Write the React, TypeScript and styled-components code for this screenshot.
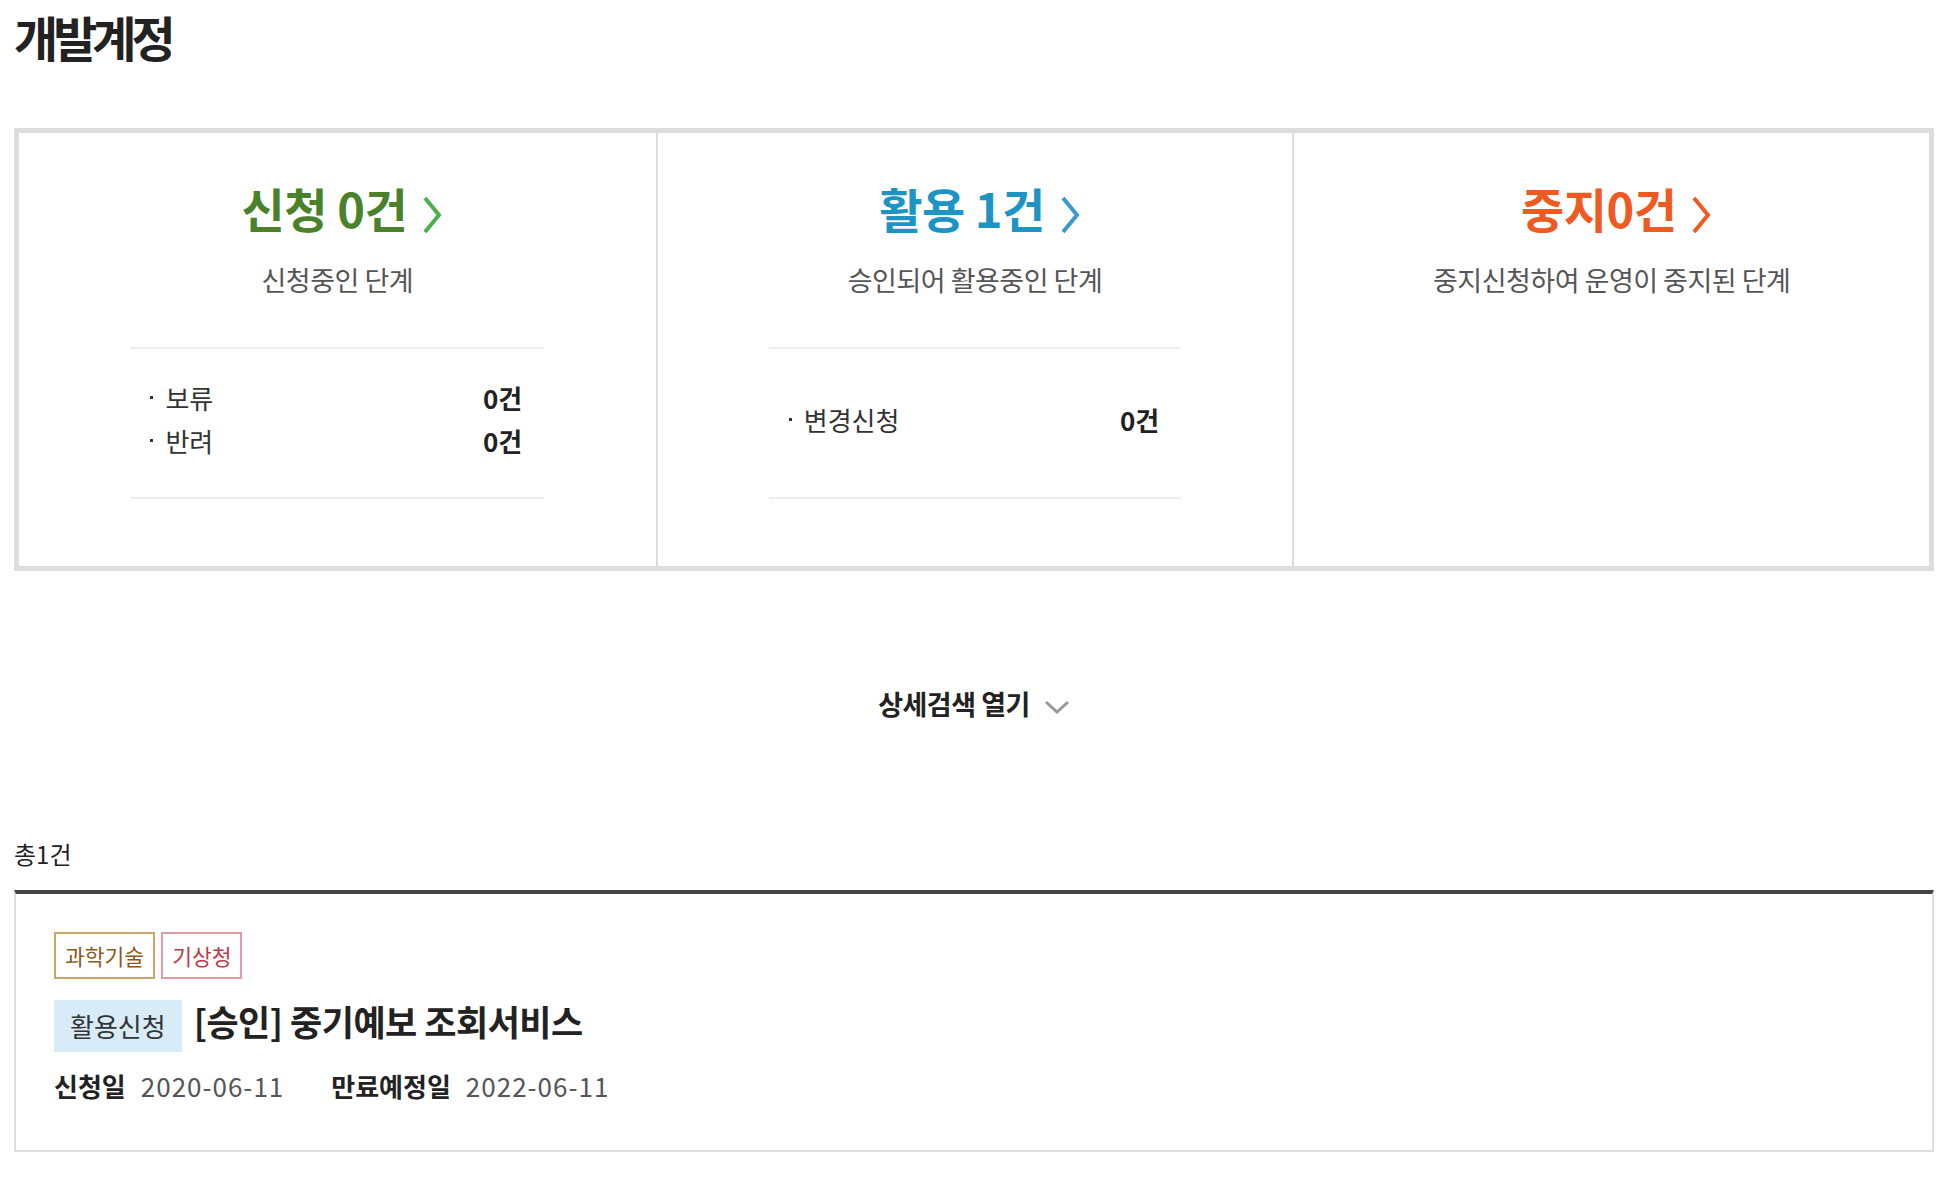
import React from 'react';
import styled, { createGlobalStyle } from 'styled-components';

const GlobalStyle = createGlobalStyle`
  html, body { margin: 0; padding: 0; background: #fff; }
  body {
    font-family: "Noto Sans CJK KR", "Noto Sans", sans-serif;
    color: #222;
  }
  * { box-sizing: border-box; }
`;

const Page = styled.div`
  width: 1920px;
  margin-left: 14px;
  padding-top: 6px;
  padding-bottom: 40px;
`;

const PageTitle = styled.h1`
  margin: 0;
  font-size: 48px;
  line-height: 60px;
  font-weight: 700;
  letter-spacing: -5px;
  color: #222;
`;

const StatusBox = styled.div`
  margin-top: 62px;
  display: grid;
  grid-template-columns: repeat(3, 1fr);
  border: 5px solid #ddd;
`;

const StatusColumn = styled.div`
  display: flex;
  flex-direction: column;
  align-items: center;
  padding: 49px 0 67px;
  & + & {
    border-left: 2px solid #ddd;
  }
`;

const StatusHeading = styled.a<{ $color: string }>`
  display: flex;
  align-items: center;
  padding-left: 10px;
  font-size: 47px;
  line-height: 52px;
  font-weight: 700;
  letter-spacing: -0.5px;
  color: ${(p) => p.$color};
  text-decoration: none;
  cursor: pointer;
`;

const HeadingChevron = styled.svg`
  width: 22px;
  height: 38px;
  margin-left: 14px;
  margin-top: 14px;
  flex: none;
`;

const StatusDesc = styled.p`
  margin: 28px 0 0;
  font-size: 27px;
  line-height: 36px;
  letter-spacing: -0.5px;
  color: #555;
`;

const SubList = styled.ul`
  list-style: none;
  margin: 49px 0 0;
  width: 65%;
  height: 152px;
  border-top: 2px solid #eee;
  border-bottom: 2px solid #eee;
  display: flex;
  flex-direction: column;
  justify-content: center;
  padding: 0 22px 8px 20px;
`;

const SubItem = styled.li`
  display: flex;
  justify-content: space-between;
  align-items: center;
  font-size: 26px;
  line-height: 43px;
  color: #333;
`;

const SubLabel = styled.span`
  display: flex;
  align-items: center;
  &::before {
    content: '';
    width: 3px;
    height: 3px;
    background: #333;
    margin-right: 12px;
  }
`;

const SubCount = styled.strong`
  font-weight: 700;
  color: #222;
`;

const DetailToggle = styled.button`
  margin: 115px auto 0;
  display: flex;
  align-items: center;
  justify-content: center;
  border: 0;
  background: none;
  padding: 0;
  font-family: inherit;
  font-size: 27px;
  line-height: 36px;
  font-weight: 700;
  letter-spacing: -0.5px;
  color: #222;
  cursor: pointer;
`;

const ToggleChevron = styled.svg`
  width: 26px;
  height: 14px;
  margin-left: 14px;
  margin-top: 5px;
`;

const TotalCount = styled.p`
  margin: 114px 0 18px;
  font-size: 24px;
  line-height: 36px;
  color: #222;
`;

const ResultCard = styled.div`
  border: 2px solid #ddd;
  border-top: 4px solid #444;
  padding: 38px 38px 46px;
`;

const TagRow = styled.div`
  display: flex;
  gap: 6px;
`;

const Tag = styled.span<{ $border: string; $color: string }>`
  height: 47px;
  padding: 0 9px;
  border: 2px solid ${(p) => p.$border};
  color: ${(p) => p.$color};
  font-size: 21.5px;
  line-height: 43px;
`;

const TitleRow = styled.div`
  margin-top: 21px;
  height: 52px;
  display: flex;
  align-items: center;
  gap: 12px;
`;

const StateBadge = styled.span`
  height: 52px;
  padding: 0 16px;
  background: #d8ecf8;
  color: #333;
  font-size: 26px;
  line-height: 52px;
`;

const ServiceTitle = styled.h3`
  margin: 0 0 10px;
  font-size: 35px;
  line-height: 42px;
  font-weight: 700;
  letter-spacing: -0.5px;
  color: #222;
`;

const DateRow = styled.dl`
  margin: 16px 0 0;
  display: flex;
  align-items: center;
  font-size: 26px;
  line-height: 36px;
`;

const DateLabel = styled.dt<{ $first?: boolean }>`
  margin-left: ${(p) => (p.$first ? '0' : '47px')};
  font-weight: 700;
  color: #222;
`;

const DateValue = styled.dd`
  margin: 0 0 0 15px;
  font-size: 26px;
  letter-spacing: 1px;
  color: #555;
`;

const Chevron = ({ color }: { color: string }) => (
  <HeadingChevron viewBox="0 0 22 38">
    <path d="M4 2 L18 19 L4 36" fill="none" stroke={color} strokeWidth={4} />
  </HeadingChevron>
);

type Stage = {
  title: string;
  color: string;
  chevron: string;
  desc: string;
  items?: { label: string; count: string }[];
};

const stages: Stage[] = [
  {
    title: '신청 0건',
    color: '#4a822b',
    chevron: '#4cae4c',
    desc: '신청중인 단계',
    items: [
      { label: '보류', count: '0건' },
      { label: '반려', count: '0건' },
    ],
  },
  {
    title: '활용 1건',
    color: '#1e94c4',
    chevron: '#3a9ad2',
    desc: '승인되어 활용중인 단계',
    items: [{ label: '변경신청', count: '0건' }],
  },
  {
    title: '중지0건',
    color: '#ef5a22',
    chevron: '#ef5a22',
    desc: '중지신청하여 운영이 중지된 단계',
  },
];

export default function App() {
  return (
    <>
      <GlobalStyle />
      <Page>
        <PageTitle>개발계정</PageTitle>

        <StatusBox>
          {stages.map((s) => (
            <StatusColumn key={s.title}>
              <StatusHeading $color={s.color}>
                {s.title}
                <Chevron color={s.chevron} />
              </StatusHeading>
              <StatusDesc>{s.desc}</StatusDesc>
              {s.items && (
                <SubList>
                  {s.items.map((it) => (
                    <SubItem key={it.label}>
                      <SubLabel>{it.label}</SubLabel>
                      <SubCount>{it.count}</SubCount>
                    </SubItem>
                  ))}
                </SubList>
              )}
            </StatusColumn>
          ))}
        </StatusBox>

        <DetailToggle type="button">
          상세검색 열기
          <ToggleChevron viewBox="0 0 26 14">
            <path d="M2 2 L13 12 L24 2" fill="none" stroke="#999" strokeWidth={3} />
          </ToggleChevron>
        </DetailToggle>

        <TotalCount>총1건</TotalCount>

        <ResultCard>
          <TagRow>
            <Tag $border="#c9a56c" $color="#8a5a1e">과학기술</Tag>
            <Tag $border="#e29aa4" $color="#c0394b">기상청</Tag>
          </TagRow>
          <TitleRow>
            <StateBadge>활용신청</StateBadge>
            <ServiceTitle>[승인] 중기예보 조회서비스</ServiceTitle>
          </TitleRow>
          <DateRow>
            <DateLabel $first>신청일</DateLabel>
            <DateValue>2020-06-11</DateValue>
            <DateLabel>만료예정일</DateLabel>
            <DateValue>2022-06-11</DateValue>
          </DateRow>
        </ResultCard>
      </Page>
    </>
  );
}
